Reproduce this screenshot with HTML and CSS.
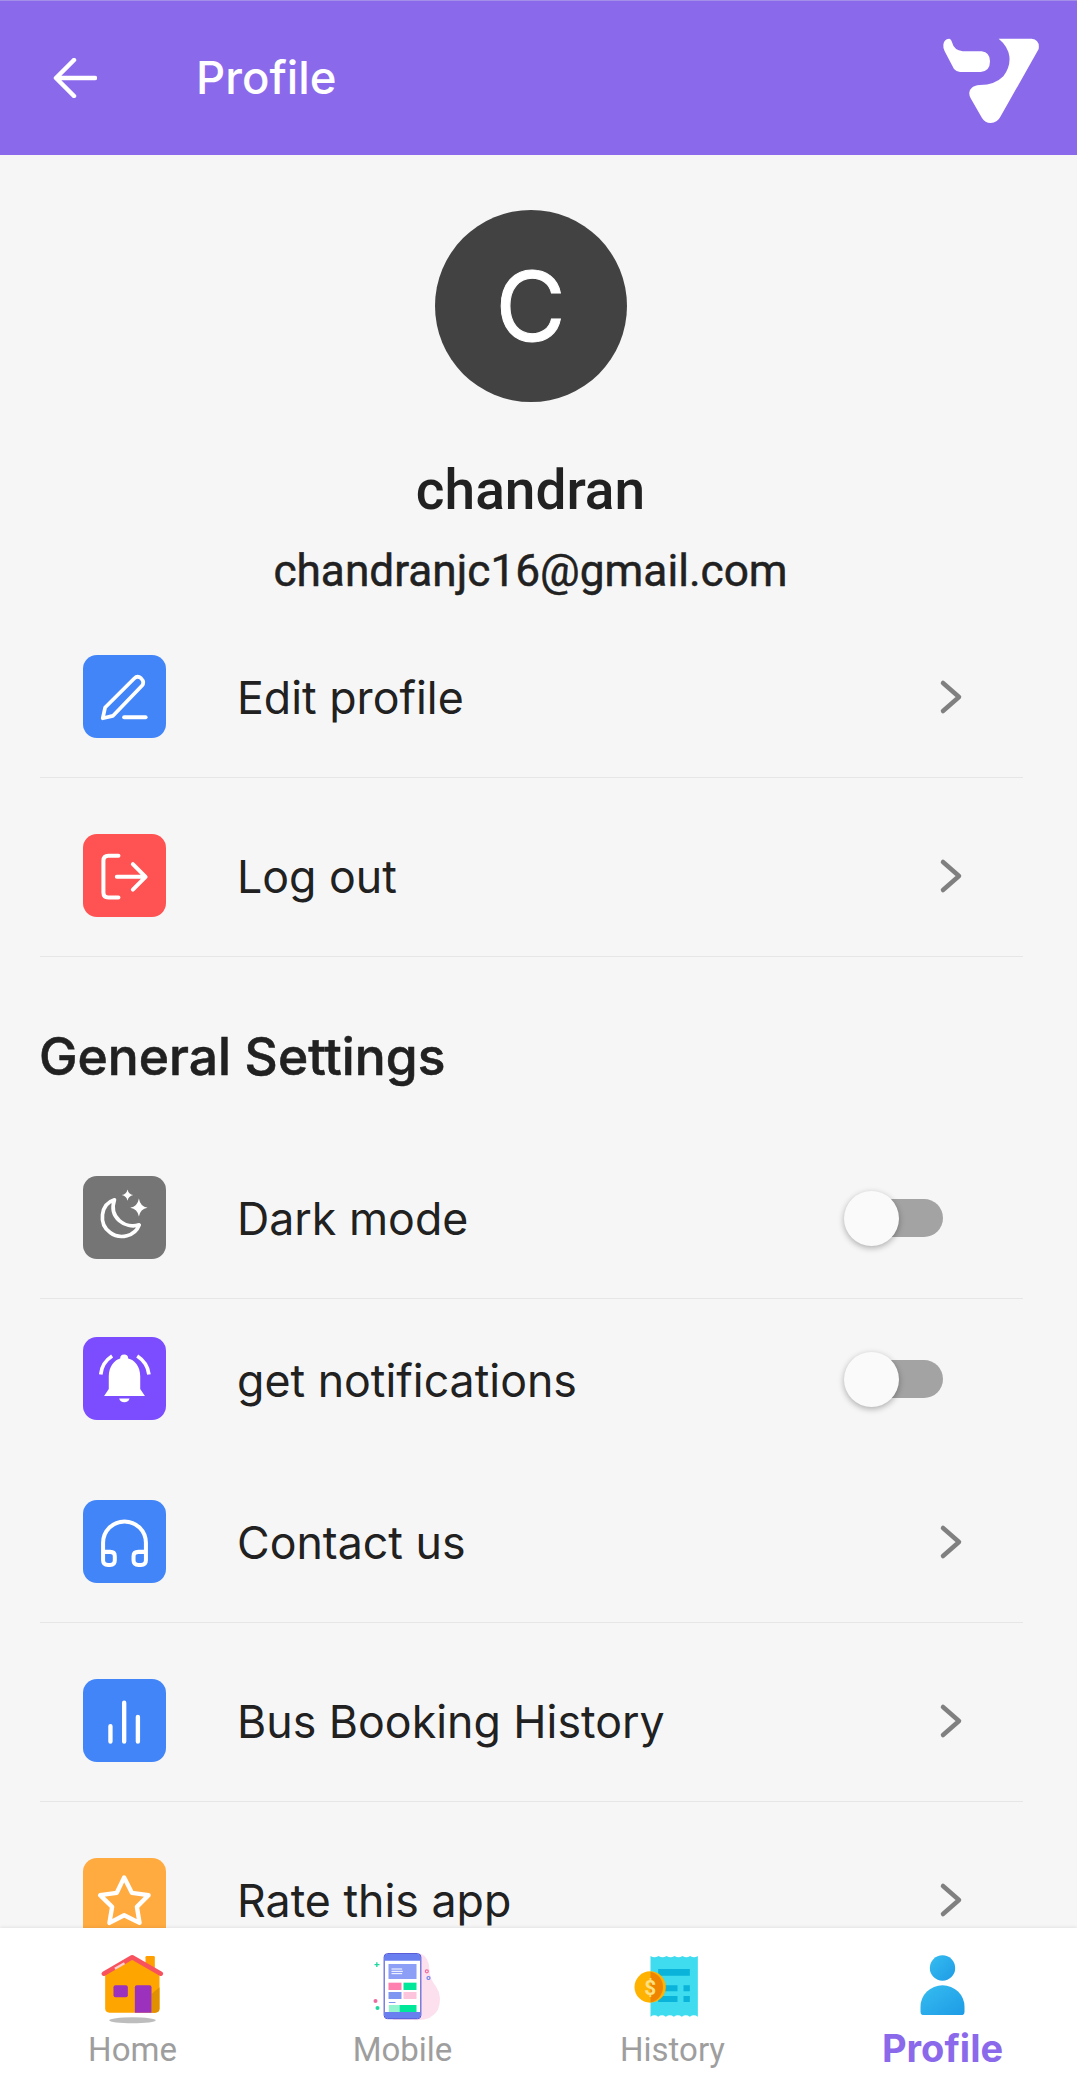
FILE: index.html
```html
<!DOCTYPE html>
<html lang="en">
<head>
  <meta charset="UTF-8" />
  <meta name="viewport" content="width=device-width, initial-scale=1.0"/>
  <title>Profile</title>
  <link rel="stylesheet" href="styles.css">
</head>
<body>
<div class="app">

  <header class="topbar">
    <svg class="back" viewBox="0 0 44 40"><path d="M42 20H4M21 2L3 20l18 18"/></svg>
    <h1 class="topbar-title">Profile</h1>
    <svg class="logo" viewBox="0 0 360 330">
      <path d="M10 65Q12 48 27 47Q33 47 36 58Q42 82 68 85L125 85Q150 88 150 115Q150 145 122 147L60 147Q50 147 42 138L14 85Q9 75 10 65Z"/>
      <path d="M176 47L275 47Q300 50 296 78L182 280Q172 300 152 300Q135 300 126 285L92 226Q82 205 95 195Q102 187 120 186Q165 186 190 160Q212 130 208 100Q204 70 176 47Z"/>
    </svg>
  </header>

  <main class="content">
    <section class="user">
      <div class="avatar">C</div>
      <div class="user-name">chandran</div>
      <div class="user-email">chandranjc16@gmail.com</div>
    </section>

    <div class="row row-first line">
      <span class="tile blue">
        <svg viewBox="69 43 248 248"><path class="s11" d="M128 232L135 200L222 113Q232 103 243 113Q254 124 245 135L158 225Z"/><path class="s12" d="M192 229H256"/></svg>
      </span>
      <span class="row-label">Edit profile</span>
      <svg class="chev" viewBox="0 0 24 36"><path d="M4 4l16 14L4 32"/></svg>
    </div>

    <div class="row line">
      <span class="tile red">
        <svg viewBox="69 580 248 248"><path class="s12" d="M175 645H145Q130 645 130 660V755Q130 770 145 770H175M170 708H255M218 670L256 708L218 746"/></svg>
      </span>
      <span class="row-label">Log out</span>
      <svg class="chev" viewBox="0 0 24 36"><path d="M4 4l16 14L4 32"/></svg>
    </div>

    <h2 class="section-title">General Settings</h2>

    <div class="row row-toggle line">
      <span class="tile grey">
        <svg viewBox="69 46 248 248"><path class="s11" d="M163 117C120 130 115 190 150 215C180 238 225 225 237 192C195 205 145 170 163 117Z"/><path class="fill" d="M236 113Q240 137 262 141Q240 145 236 167Q232 145 210 141Q232 137 236 113Z"/><path class="fill" d="M202 86Q205 100 219 103Q205 106 202 120Q199 106 185 103Q199 100 202 86Z"/></svg>
      </span>
      <span class="row-label">Dark mode</span>
      <span class="switch"><span class="knob"></span></span>
    </div>

    <div class="row row-bell">
      <span class="tile purple">
        <svg viewBox="69 533 248 248"><path class="fill" d="M132 709L146 688V650C146 620 165 600 180 597A12 12 0 0 1 204 597C222 600 240 620 240 650V688L254 709Z"/><path class="fill" d="M177 717H208A16 15 0 0 1 177 717Z"/><path class="arc" d="M122 645Q125 610 156 590M266 645Q262 610 231 590"/></svg>
      </span>
      <span class="row-label">get notifications</span>
      <span class="switch"><span class="knob"></span></span>
    </div>

    <div class="row row-contact line">
      <span class="tile blue">
        <svg viewBox="69 60 248 248"><path class="s12" d="M129 240V188A64 64 0 0 1 257 188V240M129 215H150Q164 215 164 228V240Q164 254 150 254H144Q129 254 129 240M257 215H235Q220 215 220 228V240Q220 254 235 254H242Q257 254 257 240"/></svg>
      </span>
      <span class="row-label">Contact us</span>
      <svg class="chev" viewBox="0 0 24 36"><path d="M4 4l16 14L4 32"/></svg>
    </div>

    <div class="row line">
      <span class="tile blue">
        <svg viewBox="69 597 248 248"><path class="s13" d="M151 738V784M192 668V784M233 710V784"/></svg>
      </span>
      <span class="row-label">Bus Booking History</span>
      <svg class="chev" viewBox="0 0 24 36"><path d="M4 4l16 14L4 32"/></svg>
    </div>

    <div class="row">
      <span class="tile orange">
        <svg viewBox="69 54 248 248"><path class="s13" d="M192 112L215 158L265 165L230 200L238 248L192 225L148 248L156 200L120 165L170 158Z"/></svg>
      </span>
      <span class="row-label">Rate this app</span>
      <svg class="chev" viewBox="0 0 24 36"><path d="M4 4l16 14L4 32"/></svg>
    </div>
  </main>

  <nav class="tabs">
    <div class="tab">
      <svg viewBox="100.5 336 240 216">
        <rect x="258" y="348" width="28" height="44" rx="4" fill="#ffa000"/>
        <path d="M137 400L218 358L300 400V505Q300 518 287 518H150Q137 518 137 505Z" fill="#ffa500"/>
        <path d="M276 518V462L300 442V505Q300 518 287 518Z" fill="#e09000"/>
        <rect x="162" y="436" width="43" height="36" rx="6" fill="#9c31be"/>
        <path d="M226 518V442Q226 436 232 436H270Q276 436 276 442V518Z" fill="#9c31be"/>
        <path d="M133 401L218 352L304 401" fill="none" stroke="#f9525f" stroke-width="14" stroke-linecap="round" stroke-linejoin="round"/>
        <path d="M166 386L195 370" stroke="#ffd0d0" stroke-width="7"/>
        <ellipse cx="219" cy="541" rx="70" ry="9" fill="#bdbdbd"/>
      </svg>
      <span class="tab-label">Home</span>
    </div>
    <div class="tab">
      <svg viewBox="910.5 336 240 216">
        <path d="M1085 342Q1108 350 1110 390Q1112 420 1130 440Q1150 470 1135 510Q1115 545 1060 540H1000V342Z" fill="#fce0ee"/>
        <rect x="974" y="341" width="110" height="195" rx="10" fill="#fff" stroke="#3b3fd0" stroke-width="3"/>
        <path d="M975 362V351Q975 342 984 342H1074Q1083 342 1083 351V362Z" fill="#6a7fef"/>
        <path d="M975 516V526Q975 535 984 535H1074Q1083 535 1083 526V516Z" fill="#6a7fef"/>
        <rect x="987" y="372" width="84" height="45" fill="#8c9ef5"/>
        <path d="M996 387H1028M996 394H1030M996 401H1028" stroke="#fff" stroke-width="3"/>
        <rect x="987" y="428" width="39" height="22" fill="#ff7fae"/>
        <rect x="1032" y="428" width="39" height="22" fill="#00e79a"/>
        <rect x="987" y="456" width="39" height="21" fill="#7f95f2"/>
        <rect x="1032" y="456" width="39" height="21" fill="#fcc5db"/>
        <rect x="988" y="486" width="20" height="3" fill="#7f95f2"/>
        <rect x="988" y="495" width="32" height="21" fill="#93f5cf"/>
        <rect x="1020" y="495" width="51" height="21" fill="#00e79a"/>
        <path d="M945 374H960M952 367V381" stroke="#1fd8a0" stroke-width="4"/>
        <circle cx="948" cy="483" r="6" fill="#ee6aa0"/>
        <circle cx="954" cy="504" r="6" fill="#1fd8a0"/>
        <circle cx="1102" cy="394" r="4.5" fill="none" stroke="#ee6aa0" stroke-width="3.5"/>
        <circle cx="1107" cy="414" r="4.5" fill="none" stroke="#6a7fef" stroke-width="3.5"/>
      </svg>
      <span class="tab-label">Mobile</span>
    </div>
    <div class="tab">
      <svg viewBox="160.5 156 240 216">
        <path d="M213 168q12 8 24 0q12 8 24 0q12 8 24 0q12 8 24 0q12 8 23 0q11 8 23 0V350q-12-8-24 0q-12-8-24 0q-12-8-24 0q-12-8-24 0q-12-8-23 0q-11-8-23 0Z" fill="#3edcee"/>
        <path d="M236 207H331V227H236ZM236 256H294V274H236ZM312 256H331V274H312ZM236 288H294V306H236ZM312 288H331V306H312Z" fill="#0ab3d9"/>
        <circle cx="212" cy="261" r="47" fill="#ffb300"/>
        <path d="M213 215A47 47 0 0 1 213 307Z" fill="#ee8400"/>
        <text class="dollar" x="212" y="284" text-anchor="middle">$</text>
      </svg>
      <span class="tab-label">History</span>
    </div>
    <div class="tab tab-active">
      <svg viewBox="970.5 156 240 216">
        <defs><linearGradient id="personFill" x1="0" y1="0" x2="1" y2="1"><stop offset="0" stop-color="#36bdf0"/><stop offset="1" stop-color="#1e9be6"/></linearGradient></defs>
        <circle cx="1089" cy="204" r="38" fill="url(#personFill)"/>
        <path d="M1023 335V320A66 64 0 0 1 1155 320V335Q1155 345 1145 345H1033Q1023 345 1023 335Z" fill="url(#personFill)"/>
      </svg>
      <span class="tab-label">Profile</span>
    </div>
  </nav>

</div>
</body>
</html>
```

FILE: styles.css
```css
* {
  box-sizing: border-box;
}
body {
  margin: 0;
  background: #f6f6f6;
  color: #212121;
  font-family: 'Inter', sans-serif;
}
.app {
  display: flex;
  flex-direction: column;
  width: 1077px;
  height: 2089px;
  overflow: hidden;
}

/* top bar */
.topbar {
  flex: none;
  display: flex;
  align-items: center;
  height: 155px;
  padding: 0 17px 0 53px;
  background: #8b69eb;
  border-top: 1px solid #a48fe6;
  color: #fff;
}
.back {
  width: 44px;
  height: 40px;
  fill: none;
  stroke: #fff;
  stroke-width: 4.5;
  stroke-linecap: round;
  stroke-linejoin: round;
}
.topbar-title {
  flex: 1;
  margin: 0 0 2px 99px;
  font-size: 45.5px;
  font-weight: 500;
}
.logo {
  width: 120px;
  height: 110px;
  fill: #fff;
}

/* user block */
.content {
  flex: 1;
  min-height: 0;
  overflow: hidden;
  padding: 0 54px 0 40px;
}
.user {
  display: flex;
  flex-direction: column;
  align-items: center;
  height: 444px;
  padding: 55px 2px 0 0;
}
.avatar {
  width: 192px;
  height: 192px;
  border-radius: 50%;
  background: #424242;
  color: #fff;
  font-size: 96px;
  line-height: 192px;
  text-align: center;
  -webkit-text-stroke: 1px #fff;
}
.user-name {
  margin-top: 58px;
  font-family: 'Roboto', sans-serif;
  font-size: 55px;
  font-weight: 500;
  line-height: 60px;
}
.user-email {
  margin-top: 26px;
  font-family: 'Roboto', sans-serif;
  font-size: 44.2px;
  font-weight: 400;
  line-height: 50px;
  -webkit-text-stroke: 0.5px #212121;
}

/* rows */
.row {
  display: flex;
  align-items: center;
  padding: 56px 0 39px 43px;
}
.row-first {
  padding-top: 56px;
}
.row-toggle {
  padding-top: 0;
}
.row-bell {
  padding-top: 38px;
  padding-bottom: 80px;
}
.row-bell .row-label {
  padding-top: 4px;
}
.row-contact {
  padding-top: 0;
}
.line {
  border-bottom: 1px solid #e6e6e6;
}
.tile {
  flex: none;
  width: 83px;
  height: 83px;
  border-radius: 14px;
}
.tile svg {
  display: block;
  width: 83px;
  height: 83px;
}
.blue { background: #4285f9; }
.red { background: #ff5252; }
.grey { background: #757575; }
.purple { background: #7c4dff; }
.orange { background: #ffab40; }
.tile path {
  fill: none;
  stroke: #fff;
  stroke-linecap: round;
  stroke-linejoin: round;
}
.tile .s11 { stroke-width: 11; }
.tile .s12 { stroke-width: 12; }
.tile .s13 { stroke-width: 13; }
.tile .fill {
  fill: #fff;
  stroke: none;
}
.tile .arc {
  stroke-width: 11;
  stroke-linecap: butt;
}
.row-label {
  flex: 1;
  margin-left: 71px;
  padding-top: 2px;
  font-size: 44.7px;
  line-height: 52px;
}
.chev {
  flex: none;
  width: 24px;
  height: 36px;
  margin-right: 60px;
  fill: none;
  stroke: #808080;
  stroke-width: 4.5;
  stroke-linecap: round;
  stroke-linejoin: round;
}
.section-title {
  margin: 0 0 0 -1px;
  padding: 69px 0 0;
  height: 219px;
  font-size: 51.5px;
  font-weight: 500;
  line-height: 60px;
  -webkit-text-stroke: 0.6px #212121;
}

/* switch */
.switch {
  flex: none;
  position: relative;
  width: 83px;
  height: 38px;
  margin-right: 80px;
  border-radius: 19px;
  background: #a3a3a3;
}
.knob {
  position: absolute;
  top: -8px;
  left: -16px;
  width: 55px;
  height: 55px;
  border-radius: 50%;
  background: #fafafa;
  box-shadow: 0 2px 6px rgba(0,0,0,0.3);
}

/* bottom tabs */
.tabs {
  flex: none;
  display: grid;
  grid-template-columns: repeat(4, 270px);
  justify-content: center;
  height: 161px;
  padding: 24px 2px 0 0;
  background: #fff;
  box-shadow: 0 -1px 3px rgba(0,0,0,0.08);
  position: relative;
}
.tab {
  display: flex;
  flex-direction: column;
  align-items: center;
}
.tab svg {
  display: block;
  width: 80px;
  height: 72px;
}
.tab-label {
  margin-top: 1px;
  color: #9e9e9e;
  font-family: 'Roboto', sans-serif;
  font-size: 33px;
  line-height: 50px;
}
.tab-active .tab-label {
  margin-top: -1px;
  color: #8b69eb;
  font-family: 'Inter', sans-serif;
  font-size: 38px;
  font-weight: 700;
}
.dollar {
  fill: #ffe082;
  font-family: 'Roboto', sans-serif;
  font-size: 62px;
  font-weight: 700;
}
```
